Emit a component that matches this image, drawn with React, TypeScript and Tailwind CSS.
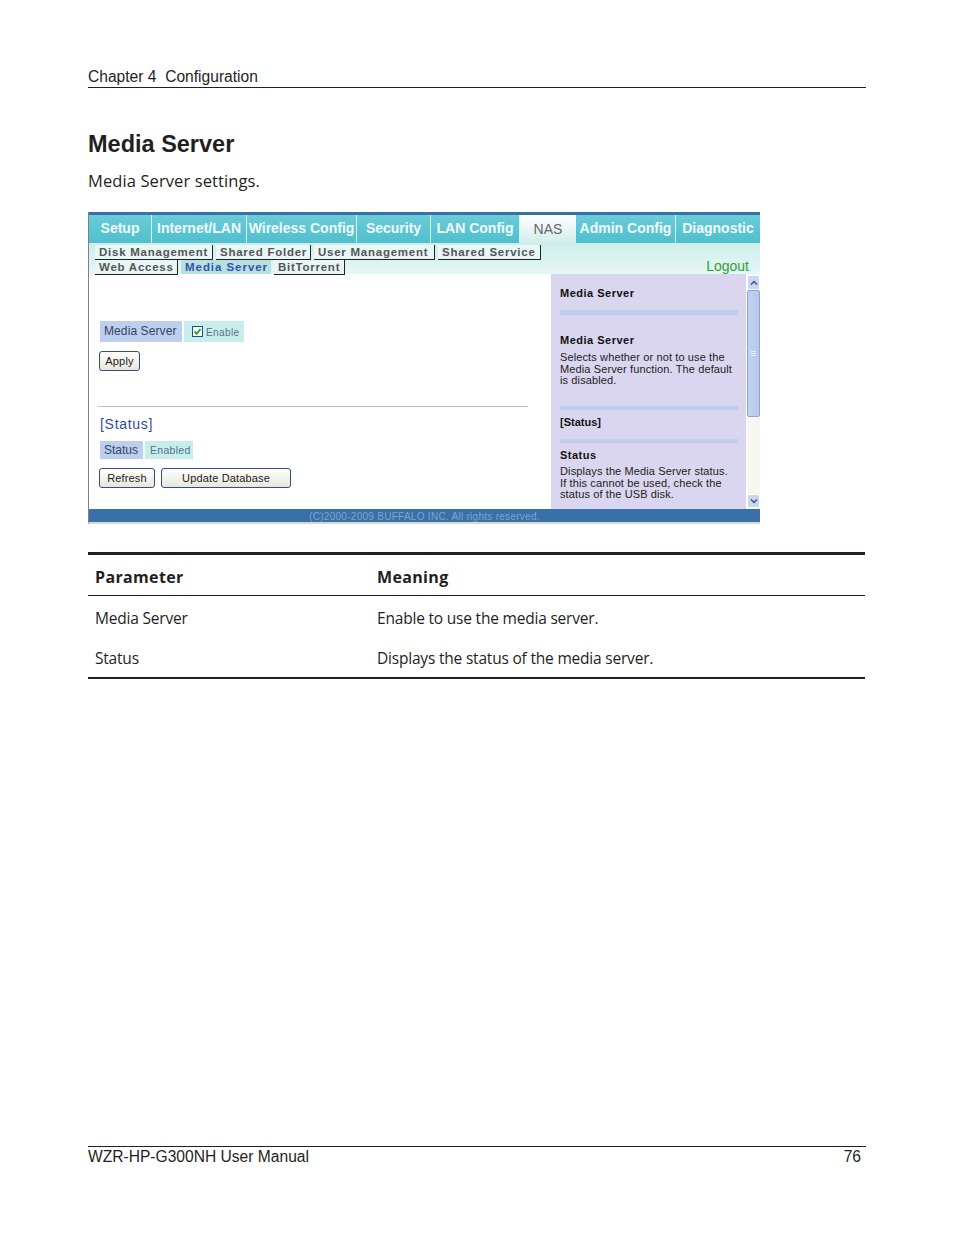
const mainTabs = [
  { label: 'Setup', width: 'w-[63px]' },
  { label: 'Internet/LAN', width: 'w-[95px]' },
  { label: 'Wireless Config', width: 'w-[110px]' },
  { label: 'Security', width: 'w-[74px]' },
  { label: 'LAN Config', width: 'w-[89px]' },
  { label: 'NAS', width: 'w-[56px]', active: true },
  { label: 'Admin Config', width: 'w-[100px]' },
  { label: 'Diagnostic', width: 'w-[84px]' },
];

const subRowOne = [
  { label: 'Disk Management', width: 'w-[118px]' },
  { label: 'Shared Folder', width: 'w-[95px]' },
  { label: 'User Management', width: 'w-[121px]' },
  { label: 'Shared Service', width: 'w-[103px]' },
];

const subRowTwo = [
  { label: 'Web Access', width: 'w-[83px]' },
  { label: 'Media Server', width: 'w-[90px]', active: true },
  { label: 'BitTorrent', width: 'w-[71px]' },
];

function SubTab({ label, width, active }: { label: string; width: string; active?: boolean }) {
  if (active) {
    return (
      <div className={`${width} h-[14px] ml-[3px] pl-[4px] bg-[#b5e2e0] text-[#3550b0] text-[11.5px] font-bold leading-[14px] tracking-[0.95px] whitespace-nowrap`}>
        {label}
      </div>
    );
  }
  return (
    <div className={`${width} h-[15px] ml-[3px] first:ml-0 pl-[4px] bg-[#e8f7f6] border-r border-b border-[#222222] text-[#555555] text-[11.5px] font-bold leading-[14px] tracking-[0.75px] whitespace-nowrap`}>
      {label}
    </div>
  );
}

function RouterButton({ label, width }: { label: string; width: string }) {
  return (
    <div className={`${width} h-[20px] rounded-[3px] border border-[#2f4f80] bg-gradient-to-b from-white to-[#e8e6dc] text-[#222222] text-[11px] leading-[18px] tracking-[0.15px] text-center`}>
      {label}
    </div>
  );
}

function HelpRule({ className }: { className: string }) {
  return <div className={`bg-[#bccfee] ${className}`} />;
}

function RouterScreen() {
  return (
    <div className="w-[672px] h-[312px] font-['Liberation_Sans',sans-serif] border-l border-[#808080] border-b-2 border-b-[#d8d8d0] flex flex-col">
      <div className="h-[3px] bg-[#3a70a8]" />
      <div className="flex h-[28px] bg-white">
        {mainTabs.map((tab) =>
          tab.active ? (
            <div key={tab.label} className={`${tab.width} bg-gradient-to-b from-white to-[#d0eeec] text-[#666666] text-[14px] leading-[29px] text-center`}>
              {tab.label}
            </div>
          ) : (
            <div key={tab.label} className={`${tab.width} bg-gradient-to-b from-[#6accd8] to-[#4fbfcd] border-r last:border-r-0 border-[#d8f2f4] text-[#f2fbfc] text-[14px] font-bold leading-[27px] text-center whitespace-nowrap`}>
              {tab.label}
            </div>
          ),
        )}
      </div>
      <div className="h-[31px] bg-gradient-to-b from-[#cdeeec] to-[#e6f7f5] relative pl-[6px] pt-[2px]">
        <div className="flex">
          {subRowOne.map((tab) => (
            <SubTab key={tab.label} {...tab} />
          ))}
        </div>
        <div className="flex">
          {subRowTwo.map((tab) => (
            <SubTab key={tab.label} {...tab} />
          ))}
        </div>
        <div className="absolute right-[11px] top-[15px] text-[#30a030] text-[14px] leading-[17px]">Logout</div>
      </div>
      <div className="flex h-[235px] bg-white">
        <div className="w-[462px] pt-[47px] pl-[10px]">
          <div className="flex h-[21px] pl-[1px]">
            <div className="w-[82px] bg-[#bccfee] text-[#334466] text-[12px] leading-[21px] pl-[4px] tracking-[0.1px]">Media Server</div>
            <div className="w-[60px] ml-[2px] bg-[#c8eeec] flex items-center pl-[8px]">
              <div className="w-[11px] h-[11px] border border-[#1c5180] bg-white flex items-center justify-center">
                <svg viewBox="0 0 9 9" className="w-[9px] h-[9px]">
                  <path d="M1.5 4.5 L3.6 6.8 L7.5 2" fill="none" stroke="#21a121" strokeWidth="1.8" />
                </svg>
              </div>
              <span className="ml-[3px] text-[#56708c] text-[10px] tracking-[0.4px] mt-[2px]">Enable</span>
            </div>
          </div>
          <div className="mt-[9px]">
            <RouterButton label="Apply" width="w-[41px]" />
          </div>
          <div className="mt-[35px] -ml-[1px] w-[430px] h-px bg-[#c4c2a8]" />
          <div className="mt-[8px] pl-[1px] text-[#334a9a] text-[14px] leading-[18px] tracking-[0.7px]">[Status]</div>
          <div className="mt-[8px] flex h-[18px] pl-[1px]">
            <div className="w-[43px] bg-[#bccfee] text-[#334466] text-[12px] leading-[19px] pl-[4px]">Status</div>
            <div className="w-[48px] ml-[2px] bg-[#c8eeec] text-[#56708c] text-[10.5px] leading-[18px] pl-[5px] tracking-[0.3px]">Enabled</div>
          </div>
          <div className="mt-[9px] flex gap-[6px]">
            <RouterButton label="Refresh" width="w-[56px]" />
            <RouterButton label="Update Database" width="w-[130px]" />
          </div>
        </div>
        <div className="w-[195px] bg-[#dad6ef] pl-[9px] pr-[8px] text-[#222222] text-[11px] leading-[11.5px] tracking-[0.12px]">
          <div className="mt-[13px] font-bold text-[#111111] leading-[12px] tracking-[0.5px]">Media Server</div>
          <HelpRule className="mt-[11px] h-[5px]" />
          <div className="mt-[19px] font-bold text-[#111111] leading-[12px] tracking-[0.5px]">Media Server</div>
          <div className="mt-[6px] whitespace-nowrap">
            Selects whether or not to use the
            <br />
            Media Server function. The default
            <br />
            is disabled.
          </div>
          <HelpRule className="mt-[19.5px] h-[4px]" />
          <div className="mt-[5px] font-bold text-[#111111] leading-[14px] tracking-normal">[Status]</div>
          <HelpRule className="mt-[10px] h-[4px]" />
          <div className="mt-[6px] font-bold text-[#111111] leading-[12px] tracking-[0.5px]">Status</div>
          <div className="mt-[5px] whitespace-nowrap">
            Displays the Media Server status.
            <br />
            If this cannot be used, check the
            <br />
            status of the USB disk.
          </div>
        </div>
        <div className="w-[13px] ml-px bg-[#f8f6ee] flex flex-col">
          <div className="h-[15px] mt-px rounded-[2px] bg-[#c8d8f4] border border-white flex items-center justify-center">
            <svg viewBox="0 0 8 6" className="w-[8px] h-[6px]">
              <path d="M1 4.5 L4 1.5 L7 4.5" fill="none" stroke="#44587c" strokeWidth="1.5" />
            </svg>
          </div>
          <div className="h-[127px] bg-gradient-to-r from-[#c0d2f4] to-[#b4c8ec] border border-[#8ca6d4] rounded-[2px] flex items-center justify-center">
            <div className="w-[5px] h-[5px] border-y border-[#e8eefc] flex items-center">
              <div className="w-[5px] h-px bg-[#e8eefc]" />
            </div>
          </div>
          <div className="flex-1" />
          <div className="h-[14px] mb-px rounded-[2px] bg-[#c8d8f4] border border-white flex items-center justify-center">
            <svg viewBox="0 0 8 6" className="w-[8px] h-[6px]">
              <path d="M1 1.5 L4 4.5 L7 1.5" fill="none" stroke="#44587c" strokeWidth="1.5" />
            </svg>
          </div>
        </div>
      </div>
      <div className="h-[13px] bg-[#3a70a8] text-[#7fa3cc] text-[10px] leading-[15px] tracking-[0.28px] text-center">
        (C)2000-2009 BUFFALO INC. All rights reserved.
      </div>
    </div>
  );
}

export default function App() {
  return (
    <div className="w-[954px] h-[1235px] bg-white relative px-[88px] flex flex-col font-['Open_Sans',sans-serif] text-[#231f20]">
      <div className="pt-[68px] h-[88px] border-b border-[#231f20] font-['Liberation_Sans',sans-serif] text-[15.6px] leading-[18px] whitespace-pre">
        Chapter 4  Configuration
      </div>
      <h1 className="mt-[41px] font-['Liberation_Sans',sans-serif] text-[23.5px] font-bold leading-[30px]">Media Server</h1>
      <p className="mt-[10px] text-[16.5px] leading-[24px] tracking-[0.1px]">Media Server settings.</p>
      <div className="mt-[19px]">
        <RouterScreen />
      </div>
      <div className="mt-[28px] w-[777px] border-t-[3px] border-b-2 border-[#231f20] text-[15.5px] tracking-[-0.2px]">
        <div className="flex h-[41px] pt-[3px] border-b border-[#231f20] font-bold items-center text-[16px] tracking-[0.35px]">
          <div className="w-[282px] pl-[7px]">Parameter</div>
          <div className="pl-[7px]">Meaning</div>
        </div>
        <div className="flex h-[45px] items-center">
          <div className="w-[282px] pl-[7px]">Media Server</div>
          <div className="pl-[7px]">Enable to use the media server.</div>
        </div>
        <div className="flex h-[36px] pb-[1px] items-center">
          <div className="w-[282px] pl-[7px]">Status</div>
          <div className="pl-[7px]">Displays the status of the media server.</div>
        </div>
      </div>
      <div className="mt-auto mb-[68px] h-[21px] border-t border-[#231f20] flex justify-between font-['Liberation_Sans',sans-serif] text-[15.6px] leading-[20px]">
        <span>WZR-HP-G300NH User Manual</span>
        <span className="pr-[5px]">76</span>
      </div>
    </div>
  );
}
